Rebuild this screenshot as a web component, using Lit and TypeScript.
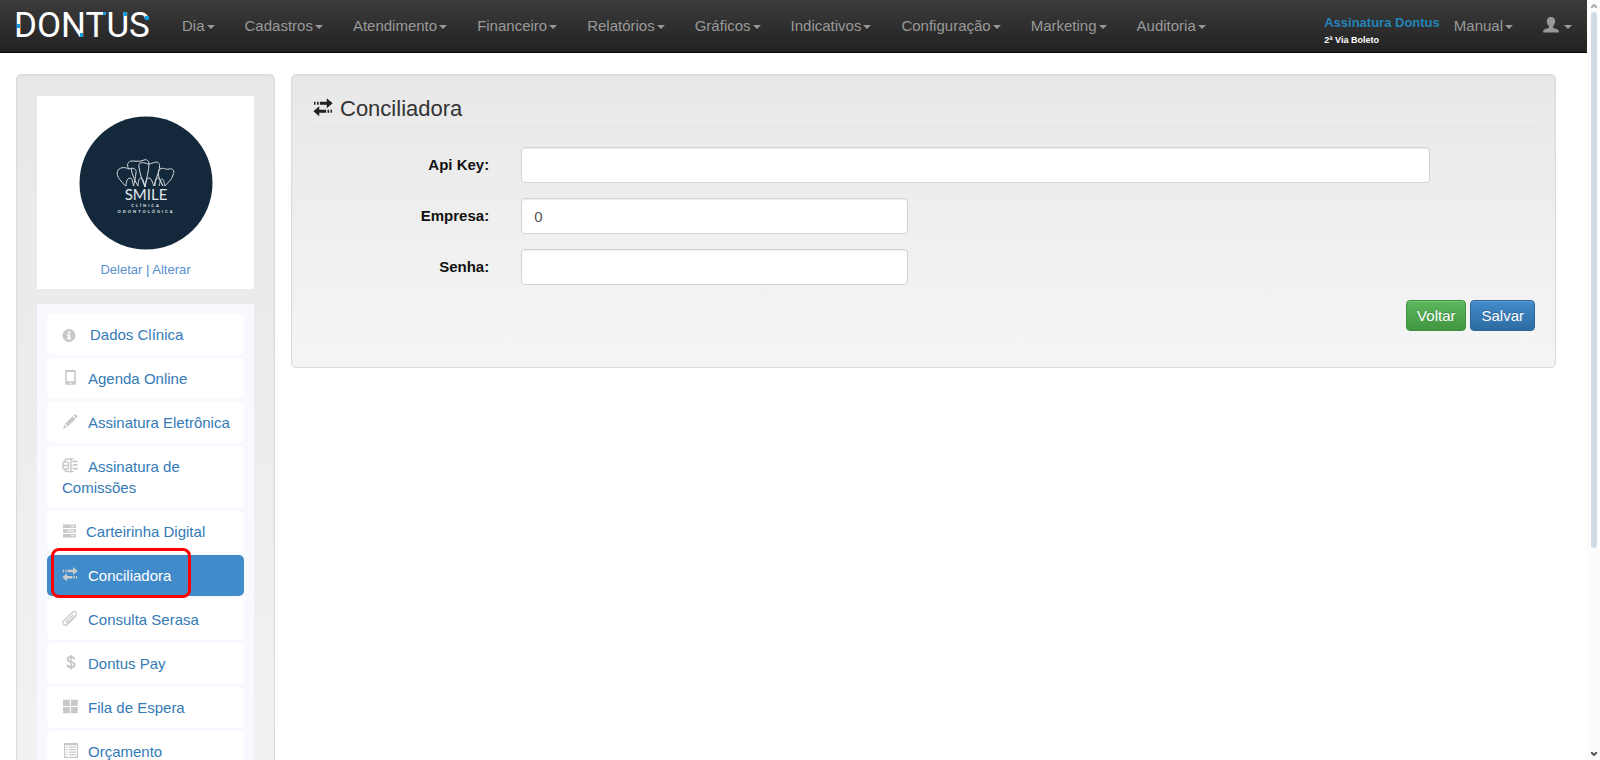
import { LitElement, html, css, svg, TemplateResult } from "lit";
import { customElement, property, state } from "lit/decorators.js";
import { classMap } from "lit/directives/class-map.js";

const icons: Record<string, TemplateResult> = {
  info: svg`<circle cx="7" cy="8.5" r="6.5"/><g fill="#fff"><rect x="6" y="4.5" width="2.2" height="2"/><path d="M5 7.5h3.2v3.6h1v1.2H5v-1.2h1V8.7H5z"/></g>`,
  phone: svg`<path fill-rule="evenodd" d="M4.5 1h8a1.3 1.3 0 0 1 1.3 1.300v12.200a1.300 1.300 0 0 1-1.300 1.300h-8a1.300 1.300 0 0 1-1.300-1.300V2.300A1.300 1.300 0 0 1 4.500 1zM4.700 3v9.300h7.600V3zM8.500 13.200a.9.9 0 1 0 0 1.800.9.9 0 0 0 0-1.800z"/>`,
  pencil: svg`<path d="M1 15.500l1.200-4L5 14.300zM3 10.700l7.600-7.500 2.900 2.900-7.600 7.500zM11.400 2.500l1-1c.5-.5 1-.5 1.500 0l1.300 1.300c.5.500.5 1 0 1.500l-1 1z"/>`,
  coins: svg`<g fill="none" stroke="currentColor" stroke-width="1.400"><path d="M3 4.500V3.500q0-1.500 1.500-1.500H9v12.500H4.500Q3 14.500 3 13v-1"/><rect x="1" y="5" width="5.500" height="7" rx="1"/><path d="M1 8.500h5.500"/></g><path d="M8.500 1.300h3.500l-1.500 1.500H8.500zM9.500 5l2-1.500h4V5.200h-4zM10 8.300l1.500-1.200h4v1.700h-4zM9.500 10l2 .8h4v1.700h-4zM8.500 13.700h2.500l1 1.500H8.500z"/>`,
  server: svg`<path fill-rule="evenodd" d="M1 1.500h13v3.600H1zM9 2.800v1h3.500v-1zM1 6.200h13v3.600H1zM5 7.500v1h7.500v-1zM1 10.900h13v3.600H1zM9 12.200v1h3.500v-1z"/>`,
  transfer: svg`<path d="M11 1L15.700 5 11 9V6.200H5.500V3.800H11zM.8 3.800h1.200v2.400H.8zM3.200 3.800h1.300v2.400H3.200zM5 7.300v2.800h5.500v2.400H5v2.800L.3 11.300zM11.600 10.100h1.300v2.400h-1.300zM14 10.100h1.200v2.400H14z"/>`,
  clip: svg`<path fill="none" stroke="currentColor" stroke-width="1.200" d="M11.200 4.800L5 11c-1.200 1.300.3 2.700 1.600 1.500l7-7c2.600-2.700-.6-5.600-3.300-3L2 10.500c-3 3.200.8 6.400 3.800 3.700l8-8"/>`,
  dollar: svg`<path fill="none" stroke="currentColor" stroke-width="2" d="M12.300 5.200C12 3.700 10.800 3 9 3 6.800 3 5.700 4 5.700 5.400c0 3.200 6.900 1.700 6.900 5.200 0 1.700-1.300 2.700-3.600 2.700-2.200 0-3.500-.9-3.700-2.700"/><path d="M8.300 1h1.500v14.700H8.300z"/>`,
  grid: svg`<path d="M1 1.700h6.800v6.200H1zM8.900 1.700h6.800v6.200H8.900zM1 9h6.800v6.300H1zM8.900 9h6.800v6.300H8.900z"/>`,
  list: svg`<path fill-rule="evenodd" d="M2 1h14v15H2zM3.200 3.200v11.600h11.600V3.200z"/><path d="M4.300 4.500h1.400v1.200H4.300zM7 4.500h6.800v1.200H7zM4.300 7h1.400v1.200H4.300zM7 7h6.800v1.200H7zM4.300 9.500h1.400v1.200H4.300zM7 9.500h6.800v1.200H7zM4.300 12h1.400v1.200H4.300zM7 12h6.800v1.200H7z"/>`,
  user: svg`<path d="M8 0c2.600 0 4.200 1.700 4.200 4.300 0 2-.9 3.900-2.200 4.900v1.300c.3 1 5.800 1.400 5.800 3.600v1.400H.2v-1.400c0-2.200 5.500-2.600 5.800-3.600V9.200c-1.300-1-2.200-2.900-2.200-4.900C3.800 1.700 5.400 0 8 0z"/>`,
};

@customElement("ui-icon")
class UiIcon extends LitElement {
  @property() name = "";
  static styles = css`
    :host { display: inline-block; width: 16px; height: 16px; line-height: 0; }
    svg { width: 100%; height: 100%; fill: currentColor; overflow: visible; }
  `;
  render() {
    return html`<svg viewBox="0 0 16 16" aria-hidden="true">${icons[this.name]}</svg>`;
  }
}

@customElement("dontus-navbar")
class DontusNavbar extends LitElement {
  static styles = css`
    :host { display: block; }
    .bar {
      display: flex; align-items: center; height: 52px; padding: 0 15px 0 14px;
      background: linear-gradient(#3c3c3c, #222); border-bottom: 1px solid #080808;
      font-size: 15px; line-height: 20px;
    }
    .brand { display: block; width: 138px; height: 42px; margin-right: 15px; overflow: visible; }
    .brand text { font: 35px Roboto, sans-serif; fill: #fff; }
    .brand rect { fill: #0a9fdc; }
    .menu { display: flex; margin: 0; padding: 0; list-style: none; }
    .link {
      display: flex; align-items: center; gap: 2px; padding: 16px 15px;
      color: #999; text-decoration: none; white-space: nowrap;
    }
    .link::after {
      content: ""; border: 4px solid transparent; border-top-color: currentColor;
      border-bottom: 0; margin-top: 2px;
    }
    .right { display: flex; align-items: center; margin-left: auto; }
    .plan { display: flex; flex-direction: column; text-decoration: none; font-weight: bold; white-space: nowrap; margin-top: 12px; }
    .plan-name { font-size: 13px; line-height: 16px; color: #2384b8; }
    .plan-slip { font-size: 9px; line-height: 18px; color: #fff; }
    .manual { padding-left: 14px; }
    .user { gap: 5px; padding-right: 0; }
    .user ui-icon { margin-bottom: 2px; }
  `;
  private items = ["Dia", "Cadastros", "Atendimento", "Financeiro", "Relatórios", "Gráficos", "Indicativos", "Configuração", "Marketing", "Auditoria"];
  render() {
    return html`<nav class="bar">
      <a href="#" aria-label="Dontus"><svg class="brand" viewBox="0 0 138 42">
        <text x="0" y="32">DONTUS</text>
        <rect x="3" y="19" width="3" height="4"/><rect x="66" y="28" width="3" height="4"/>
        <rect x="89" y="7" width="3" height="3"/><rect x="110" y="7" width="3" height="4"/><rect x="131" y="11" width="4" height="4"/>
      </svg></a>
      <ul class="menu">${this.items.map((i) => html`<li><a class="link" href="#">${i}</a></li>`)}</ul>
      <div class="right">
        <a class="plan" href="#"><span class="plan-name">Assinatura Dontus</span><span class="plan-slip">2ª Via Boleto</span></a>
        <a class="link manual" href="#">Manual</a>
        <a class="link user" href="#" aria-label="Usuário"><ui-icon name="user"></ui-icon></a>
      </div>
    </nav>`;
  }
}

interface Entry { label: string; icon: string; gap?: string }

@customElement("clinic-sidebar")
class ClinicSidebar extends LitElement {
  @state() private active = "Conciliadora";
  private entries: Entry[] = [
    { label: "Dados Clínica", icon: "info", gap: "wide" },
    { label: "Agenda Online", icon: "phone" },
    { label: "Assinatura Eletrônica", icon: "pencil" },
    { label: "Assinatura de Comissões", icon: "coins" },
    { label: "Carteirinha Digital", icon: "server", gap: "narrow" },
    { label: "Conciliadora", icon: "transfer" },
    { label: "Consulta Serasa", icon: "clip" },
    { label: "Dontus Pay", icon: "dollar" },
    { label: "Fila de Espera", icon: "grid" },
    { label: "Orçamento", icon: "list" },
  ];
  static styles = css`
    :host { display: block; }
    .photo { background: #fff; padding: 20px 0 9px; text-align: center; margin-bottom: 15px; }
    .logo { display: block; width: 134px; height: 134px; margin: 0 auto 9px; }
    .logo text { font-family: Lato, sans-serif; fill: #e6eaee; text-anchor: middle; }
    .name { font-size: 15px; }
    .sub { font-size: 4px; font-weight: bold; letter-spacing: 2px; }
    .actions { font-size: 13px; line-height: 21px; color: #428bca; }
    a { color: #337ab7; text-decoration: none; }
    .actions a { color: #5a8fd0; }
    .menu { display: flex; flex-direction: column; gap: 3px; margin: 0; padding: 10px; list-style: none; background: #f8f8ff; }
    .item { position: relative; display: block; padding: 10px 8px 10px 15px; border-radius: 5px; background: #fff; font-size: 15px; line-height: 21px; }
    .item ui-icon { color: #c8c8c8; margin-right: 10px; vertical-align: -1px; }
    .item .wide { margin-right: 12px; vertical-align: -3px; }
    .item .narrow { margin-right: 8px; vertical-align: -2px; }
    .item.active { background: #428bca; color: #fff; }
    .active ui-icon { color: #ccc; }
    .mark { position: absolute; left: 4px; top: -7px; width: 134px; bottom: -2px; border: 3px solid #f00; border-radius: 8px; }
  `;
  render() {
    return html`
      <div class="photo">
        <svg class="logo" viewBox="0 0 134 134" role="img" aria-label="Smile Clínica Odontológica">
          <circle cx="67" cy="67" r="66.500" fill="#13283b"/>
          <g fill="none" stroke="#d5dade" stroke-width="1" stroke-linejoin="round">
            <path d="M50 53c-4-2-8-2-11 1-2 4 0 8 3 11 2 2 3 4 5 5 0-3 1-8 4-8s2 5 4 8"/>
            <path d="M50 53c4-2 8 0 7 4-1 5-1 10-3 13M50 53c-3-4-1-8 3-8 4 0 8 1 12-1 3-1 5 1 5 4"/>
            <path d="M52 52c1 7 4 13 7 18 0-4 1-8 3-8s3 5 4 9"/>
            <path d="M70 48c0 7-3 16-4 23M60 51c-1-4 2-5 6-4 4 2 7 0 11-1 4 0 4 4 3 8-1 5-4 10-5 16"/>
            <path d="M60 51c1 7 3 13 6 20 1-4 1-9 4-9s3 5 5 8"/>
            <path d="M76 70c0-4 1-8 3-8s3 5 5 8c-3-5-7-13-3-17 3-2 6 1 9 0 4-1 6 2 4 6-1 5-6 8-8 11-1-3-1-7-3-7s-2 4-3 7"/>
          </g>
          <text class="name" x="67" y="84">SMILE</text>
          <text class="sub" x="67" y="91">CLÍNICA</text>
          <text class="sub" x="67" y="97">ODONTOLÓGICA</text>
        </svg>
        <div class="actions"><a href="#">Deletar</a> | <a href="#">Alterar</a></div>
      </div>
      <ul class="menu">${this.entries.map((e) => {
        const on = e.label === this.active;
        return html`<li><a href="#" class=${classMap({ item: true, active: on })}><ui-icon class=${e.gap ?? ""} name=${e.icon}></ui-icon>${e.label}${on ? html`<span class="mark"></span>` : ""}</a></li>`;
      })}</ul>`;
  }
}

@customElement("conciliadora-form")
class ConciliadoraForm extends LitElement {
  static styles = css`
    :host { display: block; }
    .title { display: flex; align-items: center; gap: 6px; margin: 0 0 20px; padding-bottom: 3px; border-bottom: 1px solid #e3e3e3; font-size: 22px; line-height: 28px; font-weight: normal; color: #333; }
    .title ui-icon { width: 22px; height: 20px; color: #222; margin-bottom: 4px; }
    .row { display: grid; grid-template-columns: repeat(12, 1fr); margin: 0 -16px 15px; }
    .row label { grid-column: span 2; padding: 7px 16px 0; text-align: right; font-size: 15px; line-height: 21px; font-weight: bold; color: #111; }
    .cell { padding: 0 16px; grid-column: span 4; }
    .cell.long { grid-column: span 9; }
    input {
      display: block; box-sizing: border-box; width: 100%; height: 36px; padding: 6px 12px;
      border: 1px solid #d4d4d4; border-radius: 4px; background: #fff; color: #555;
      font: 15px/21px "Liberation Sans", Arial, sans-serif; box-shadow: inset 0 1px 1px rgba(0, 0, 0, .075);
    }
    .buttons { display: flex; justify-content: flex-end; gap: 4px; }
    button {
      padding: 4px 10px; border: 1px solid; border-radius: 4px; color: #fff;
      font: 15px/21px "Liberation Sans", Arial, sans-serif; text-shadow: 0 -1px 0 rgba(0, 0, 0, .2);
      box-shadow: inset 0 1px 0 rgba(255, 255, 255, .15);
    }
    .back { background: linear-gradient(#5cb85c, #419641); border-color: #3e8f3e; }
    .save { background: linear-gradient(#428bca, #2d6ca2); border-color: #2b669a; }
  `;
  render() {
    return html`<h1 class="title"><ui-icon name="transfer"></ui-icon>Conciliadora</h1>
      <form @submit=${(e: Event) => e.preventDefault()}>
        <div class="row"><label for="key">Api Key:</label><div class="cell long"><input id="key" type="text"></div></div>
        <div class="row"><label for="company">Empresa:</label><div class="cell"><input id="company" type="text" value="0"></div></div>
        <div class="row"><label for="password">Senha:</label><div class="cell"><input id="password" type="password"></div></div>
        <div class="buttons"><button class="back" type="button">Voltar</button><button class="save" type="submit">Salvar</button></div>
      </form>`;
  }
}

@customElement("app-root")
class AppRoot extends LitElement {
  static styles = css`
    :host { display: grid; grid-template-columns: minmax(0, 1fr) 13px; height: 100vh; overflow: hidden; background: #fff; font-family: "Liberation Sans", Arial, sans-serif; }
    .page { min-width: 0; height: 100vh; overflow: hidden; }
    .content { display: grid; grid-template-columns: 259px minmax(0, 1fr); gap: 16px; align-items: start; padding: 21px 31px 21px 16px; }
    .well { border: 1px solid #dcdcdc; border-radius: 5px; padding: 20px; background: linear-gradient(#e8e8e8, #f5f5f5); box-shadow: inset 0 1px 3px rgba(0, 0, 0, .05); }
    .side { padding-top: 21px; padding-bottom: 220px; }
    .main { padding-bottom: 36px; }
    .scroll { display: flex; flex-direction: column; align-items: center; background: #fcfcfc; padding: 4px 2px 4px 3px; }
    .scroll svg { width: 6px; height: 4px; fill: none; stroke: #aaa; stroke-width: 2; }
    .thumb { width: 6px; height: 536px; margin: 4px 0 auto; border-radius: 3px; background: #d0dae4; }
    .scroll .down { stroke: #555; }
  `;
  render() {
    return html`
      <div class="page">
        <dontus-navbar></dontus-navbar>
        <div class="content">
          <aside class="well side"><clinic-sidebar></clinic-sidebar></aside>
          <main class="well main"><conciliadora-form></conciliadora-form></main>
        </div>
      </div>
      <div class="scroll" aria-hidden="true">
        <svg viewBox="0 0 6 4"><path d="M0 4l3-3 3 3"/></svg>
        <div class="thumb"></div>
        <svg class="down" viewBox="0 0 6 4"><path d="M0 0l3 3 3-3"/></svg>
      </div>`;
  }
}
